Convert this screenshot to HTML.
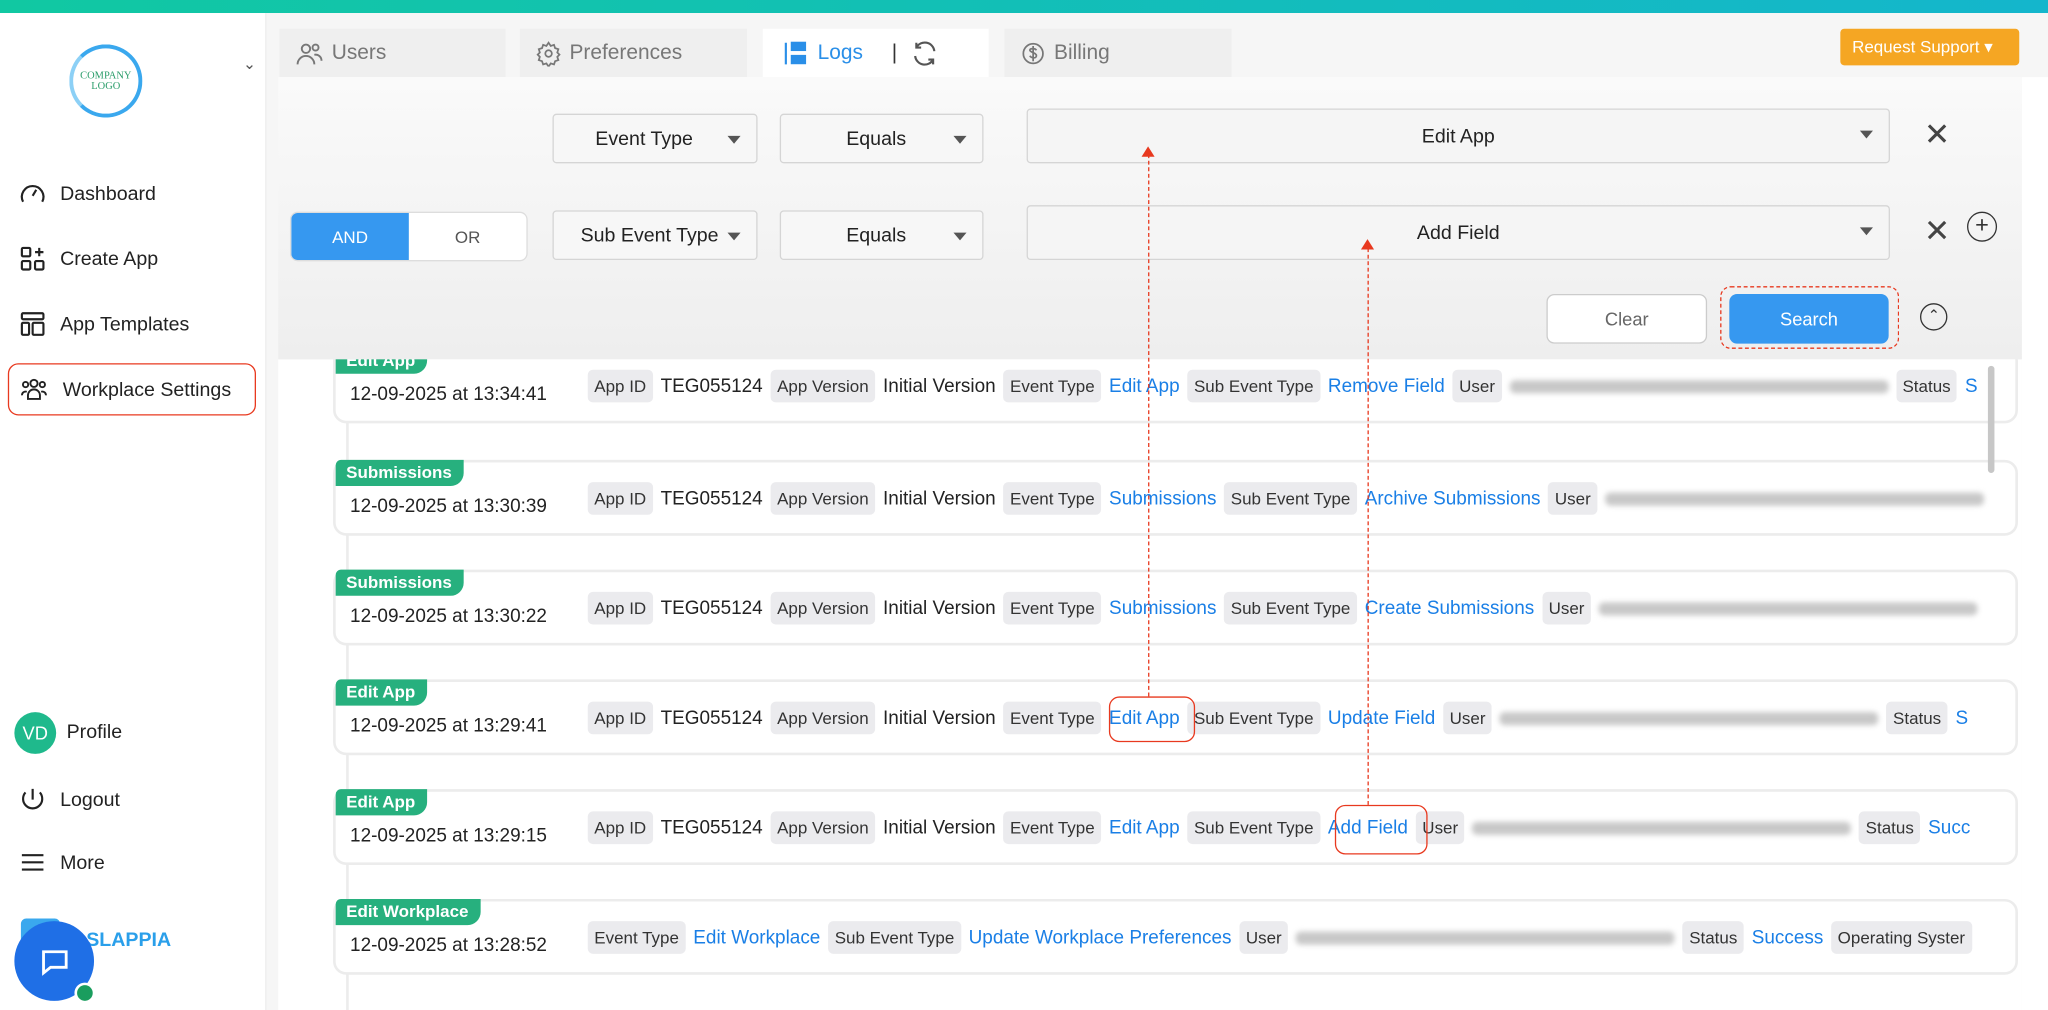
<!DOCTYPE html>
<html><head><meta charset="utf-8"><style>
*{box-sizing:border-box;margin:0;padding:0}
html,body{width:2048px;height:1010px;overflow:hidden;background:#fff;font-family:"Liberation Sans",sans-serif}
#w{position:absolute;left:0;top:0;width:1568px;height:773px;transform:scale(1.30612,1.3066);transform-origin:0 0;overflow:hidden;background:#fff}
.a{position:absolute}
.f{z-index:5}
.nav{position:absolute;left:14px;font-size:15px;color:#222;display:flex;align-items:center;gap:10px}
.tab{position:absolute;top:22px;height:37px;background:#efefef;font-size:16px;color:#777;display:flex;align-items:center;padding-left:12px;gap:6px}
.sel{position:absolute;z-index:5;height:38px;background:#f7f7f7;border:1px solid #d5d5d5;border-radius:3px;font-size:15px;color:#222;display:flex;align-items:center;justify-content:center}
.sel:after{content:"";position:absolute;right:12px;top:16px;border:5px solid transparent;border-top:6px solid #555}
.card{position:absolute;left:255px;width:1290px;height:58px;border:2px solid #ececec;border-radius:10px;background:#fff}
.tag{position:absolute;left:0;top:-2px;background:#27b07e;color:#fff;font-size:13px;font-weight:bold;padding:2px 9px 3px 8px;border-radius:4px 0 10px 0}
.dt{position:absolute;left:11px;top:26px;font-size:14.5px;color:#222}
.ch{position:absolute;top:15px;left:193px;display:flex;gap:6px;align-items:center;white-space:nowrap;font-size:14.5px;color:#222}
.k{background:#ebebee;border-radius:4px;padding:5px 5px;font-size:13px;color:#333}
.v{color:#1a7fe6}
.blur{display:inline-block;width:290px;height:10px;background:#c8c8c8;border-radius:4px;filter:blur(2px)}
.hl{position:absolute;z-index:6;border:1.5px solid #e8391f;border-radius:8px}
</style></head><body><div id="w">
<div class="a" style="left:0;top:0;width:1568px;height:10px;background:linear-gradient(90deg,#11c8a2,#14b6cc)"></div>
<div class="a" style="left:0;top:10px;width:204px;height:763px;background:#fff;border-right:1px solid #eee"></div>
<div class="a" style="left:204px;top:10px;width:1364px;height:763px;background:#f6f6f6"></div>
<div class="a" style="left:53px;top:34px;width:56px;height:56px;border-radius:50%;border:3px solid #3aa8ee;border-left-color:#8cd0f6;display:flex;align-items:center;justify-content:center;font-family:'Liberation Serif',serif;font-size:8px;color:#2a9d6a;text-align:center;line-height:8px">COMPANY<br>LOGO</div>
<div class="a" style="left:186px;top:42px;font-size:12px;color:#555">&#8964;</div>
<div class="nav" style="top:137px"><svg width="22" height="22" viewBox="0 0 24 24" fill="none" stroke="#222" stroke-width="1.8"><path d="M4 19A9 9 0 1 1 20 19"/><path d="M12 14l3-5"/></svg>Dashboard</div>
<div class="nav" style="top:187px"><svg width="22" height="22" viewBox="0 0 24 24" fill="none" stroke="#222" stroke-width="1.8"><rect x="3" y="3" width="7" height="7" rx="1"/><rect x="3" y="14" width="7" height="7" rx="1"/><rect x="14" y="14" width="7" height="7" rx="1"/><path d="M17.5 3v7M14 6.5h7"/></svg>Create App</div>
<div class="nav" style="top:237px"><svg width="22" height="22" viewBox="0 0 24 24" fill="none" stroke="#222" stroke-width="1.8"><rect x="3" y="3" width="18" height="5" rx="1"/><rect x="3" y="11" width="6" height="10" rx="1"/><rect x="12" y="11" width="9" height="10" rx="1"/></svg>App Templates</div>
<div class="a" style="left:6px;top:278px;width:190px;height:40px;border:1.5px solid #e8391f;border-radius:8px"></div>
<div class="nav" style="top:287px"><svg width="24" height="22" viewBox="0 0 24 24" fill="none" stroke="#222" stroke-width="1.6"><circle cx="12" cy="7" r="3"/><circle cx="5" cy="8" r="2.2"/><circle cx="19" cy="8" r="2.2"/><path d="M7 20v-3a5 5 0 0 1 10 0v3zM2 17a3 3 0 0 1 4-3M22 17a3 3 0 0 0-4-3"/></svg>Workplace Settings</div>
<div class="a" style="left:11px;top:545px;width:32px;height:32px;border-radius:50%;background:#1fb98c;color:#fff;font-size:14px;display:flex;align-items:center;justify-content:center">VD</div>
<div class="a" style="left:51px;top:552px;font-size:15px;color:#222">Profile</div>
<div class="nav" style="top:601px"><svg width="22" height="22" viewBox="0 0 24 24" fill="none" stroke="#222" stroke-width="1.8"><path d="M12 3v9"/><path d="M6 6a8 8 0 1 0 12 0"/></svg>Logout</div>
<div class="nav" style="top:649px"><svg width="22" height="22" viewBox="0 0 24 24" fill="none" stroke="#222" stroke-width="1.8"><path d="M3 6h18M3 12h18M3 18h18"/></svg>More</div>
<div class="a" style="left:16px;top:703px;width:30px;height:30px;background:#3aa8ee;border-radius:4px"></div>
<div class="a" style="left:66px;top:711px;font-size:15px;font-weight:bold;color:#2a9fea">SLAPPIA</div>
<div class="a" style="left:11px;top:705px;width:61px;height:61px;border-radius:50%;background:#1f6fe6;display:flex;align-items:center;justify-content:center"><svg width="26" height="26" viewBox="0 0 24 24" fill="none" stroke="#fff" stroke-width="2"><path d="M4 5h16v11H9l-5 4z"/></svg></div>
<div class="a" style="left:57px;top:752px;width:16px;height:16px;border-radius:50%;background:#1a9d5e;border:2px solid #fff"></div>
<div class="tab" style="left:214px;width:173px"><svg width="22" height="22" viewBox="0 0 24 24" fill="none" stroke="#777" stroke-width="1.6"><circle cx="9" cy="8" r="3.5"/><circle cx="17" cy="7" r="2.5"/><path d="M2 21a7 7 0 0 1 14 0M16 13a5 5 0 0 1 6 5"/></svg>Users</div>
<div class="tab" style="left:398px;width:174px"><svg width="20" height="20" viewBox="0 0 24 24" fill="none" stroke="#777" stroke-width="1.6"><circle cx="12" cy="12" r="3"/><path d="M12 2l2 3 3-1 1 3 3 1-1 3 2 2-2 2 1 3-3 1-1 3-3-1-2 3-2-3-3 1-1-3-3-1 1-3-2-2 2-2-1-3 3-1 1-3 3 1z"/></svg>Preferences</div>
<div class="tab" style="left:584px;width:173px;background:#fff;color:#2a8fe8;padding-left:14px"><svg width="22" height="22" viewBox="0 0 24 24" fill="none" stroke="#2a8fe8" stroke-width="1.8"><path d="M4 3v18"/><rect x="9" y="3" width="11" height="6" fill="#2a8fe8"/><rect x="9" y="14" width="11" height="6" fill="#2a8fe8"/></svg>Logs<span style="color:#333;margin-left:16px">|</span><svg width="22" height="22" viewBox="0 0 24 24" fill="none" stroke="#555" stroke-width="1.8" style="margin-left:4px"><path d="M20 10A8 8 0 0 0 5 7M4 14a8 8 0 0 0 15 3M5 3v4h4M19 21v-4h-4"/></svg></div>
<div class="tab" style="left:769px;width:174px"><svg width="20" height="20" viewBox="0 0 24 24" fill="none" stroke="#777" stroke-width="1.6"><circle cx="12" cy="12" r="9"/><path d="M15 9c-1-2-6-2-6 0s6 2 6 5-5 2-6 0M12 5v14"/></svg>Billing</div>
<div class="a" style="left:1409px;top:22px;width:137px;height:28px;background:#f5a623;border-radius:3px;color:#fff;font-size:13px;display:flex;align-items:center;padding-left:9px">Request Support &#9662;</div>
<div class="a f" style="left:213px;top:59px;width:1335px;height:216px;background:linear-gradient(180deg,#fafafa,#eeeeee)"></div>
<div class="sel" style="left:423px;top:87px;width:157px">Event Type&nbsp;&nbsp;&nbsp;&nbsp;</div>
<div class="sel" style="left:597px;top:87px;width:156px">Equals&nbsp;&nbsp;</div>
<div class="sel" style="left:786px;top:83px;width:661px;height:42px;background:#f5f5f5">Edit App</div>
<div class="a f" style="left:1473px;top:89px;font-size:24px;color:#444">&#x2715;</div>
<div class="a f" style="left:222px;top:162px;width:182px;height:38px;border:1px solid #ddd;border-radius:6px;background:#fff;overflow:hidden;display:flex;font-size:13px"><div style="width:90px;background:#3698f0;color:#fff;display:flex;align-items:center;justify-content:center">AND</div><div style="flex:1;color:#555;display:flex;align-items:center;justify-content:center">OR</div></div>
<div class="sel" style="left:423px;top:161px;width:157px">Sub Event Type&nbsp;&nbsp;</div>
<div class="sel" style="left:597px;top:161px;width:156px">Equals&nbsp;&nbsp;</div>
<div class="sel" style="left:786px;top:157px;width:661px;height:42px;background:#f5f5f5">Add Field</div>
<div class="a f" style="left:1473px;top:163px;font-size:24px;color:#444">&#x2715;</div>
<div class="a f" style="left:1506px;top:162px;width:23px;height:23px;border:1.5px solid #333;border-radius:50%;text-align:center;font-size:18px;line-height:19px;color:#333">+</div>
<div class="a f" style="left:1184px;top:225px;width:123px;height:38px;border:1px solid #ccc;border-radius:6px;background:#fff;font-size:14px;color:#666;display:flex;align-items:center;justify-content:center">Clear</div>
<div class="a f" style="left:1317px;top:219px;width:137px;height:48px;border:1.5px dashed #e8391f;border-radius:8px"></div>
<div class="a f" style="left:1324px;top:225px;width:122px;height:38px;border-radius:6px;background:#3698f0;font-size:14px;color:#fff;display:flex;align-items:center;justify-content:center">Search</div>
<div class="a f" style="left:1470px;top:232px;width:21px;height:21px;border:1.5px solid #333;border-radius:50%;text-align:center;font-size:11px;line-height:18px;color:#333">&#x2303;</div>
<div class="a" style="left:213px;top:275px;width:1335px;height:498px;background:#fff"></div>
<div class="a" style="left:265px;top:290px;width:2px;height:483px;background:#ececec"></div>
<div class="card" style="top:266px"><div class="tag">Edit App</div><div class="dt">12-09-2025 at 13:34:41</div><div class="ch"><span class="k">App ID</span>TEG055124<span class="k">App Version</span>Initial Version<span class="k">Event Type</span><span class="v">Edit App</span><span class="k">Sub Event Type</span><span class="v">Remove Field</span><span class="k">User</span><span class="blur"></span><span class="k">Status</span><span class="v">S</span></div></div>
<div class="card" style="top:352px"><div class="tag">Submissions</div><div class="dt">12-09-2025 at 13:30:39</div><div class="ch"><span class="k">App ID</span>TEG055124<span class="k">App Version</span>Initial Version<span class="k">Event Type</span><span class="v">Submissions</span><span class="k">Sub Event Type</span><span class="v">Archive Submissions</span><span class="k">User</span><span class="blur"></span></div></div>
<div class="card" style="top:436px"><div class="tag">Submissions</div><div class="dt">12-09-2025 at 13:30:22</div><div class="ch"><span class="k">App ID</span>TEG055124<span class="k">App Version</span>Initial Version<span class="k">Event Type</span><span class="v">Submissions</span><span class="k">Sub Event Type</span><span class="v">Create Submissions</span><span class="k">User</span><span class="blur"></span></div></div>
<div class="card" style="top:520px"><div class="tag">Edit App</div><div class="dt">12-09-2025 at 13:29:41</div><div class="ch"><span class="k">App ID</span>TEG055124<span class="k">App Version</span>Initial Version<span class="k">Event Type</span><span class="v">Edit App</span><span class="k">Sub Event Type</span><span class="v">Update Field</span><span class="k">User</span><span class="blur"></span><span class="k">Status</span><span class="v">S</span></div></div>
<div class="card" style="top:604px"><div class="tag">Edit App</div><div class="dt">12-09-2025 at 13:29:15</div><div class="ch"><span class="k">App ID</span>TEG055124<span class="k">App Version</span>Initial Version<span class="k">Event Type</span><span class="v">Edit App</span><span class="k">Sub Event Type</span><span class="v">Add Field</span><span class="k">User</span><span class="blur"></span><span class="k">Status</span><span class="v">Succ</span></div></div>
<div class="card" style="top:688px"><div class="tag">Edit Workplace</div><div class="dt">12-09-2025 at 13:28:52</div><div class="ch"><span class="k">Event Type</span><span class="v">Edit Workplace</span><span class="k">Sub Event Type</span><span class="v">Update Workplace Preferences</span><span class="k">User</span><span class="blur"></span><span class="k">Status</span><span class="v">Success</span><span class="k">Operating Syster</span></div></div>
<div class="a" style="left:1522px;top:280px;width:5px;height:82px;background:#c7c7c7;border-radius:3px;z-index:3"></div>
<div class="a" style="left:1548px;top:59px;width:20px;height:714px;background:#fff;z-index:3"></div>
<div class="hl" style="left:849px;top:533px;width:66px;height:35px"></div>
<div class="hl" style="left:1022px;top:616px;width:71px;height:38px"></div>
<div class="a f" style="left:879px;top:118px;height:415px;border-left:1.5px dashed #e8391f"></div>
<div class="a f" style="left:1047px;top:190px;height:426px;border-left:1.5px dashed #e8391f"></div>
<div class="a f" style="left:874px;top:112px;border:5px solid transparent;border-bottom:8px solid #e8391f;border-top:0"></div>
<div class="a f" style="left:1042px;top:183px;border:5px solid transparent;border-bottom:8px solid #e8391f;border-top:0"></div>
</div></body></html>
